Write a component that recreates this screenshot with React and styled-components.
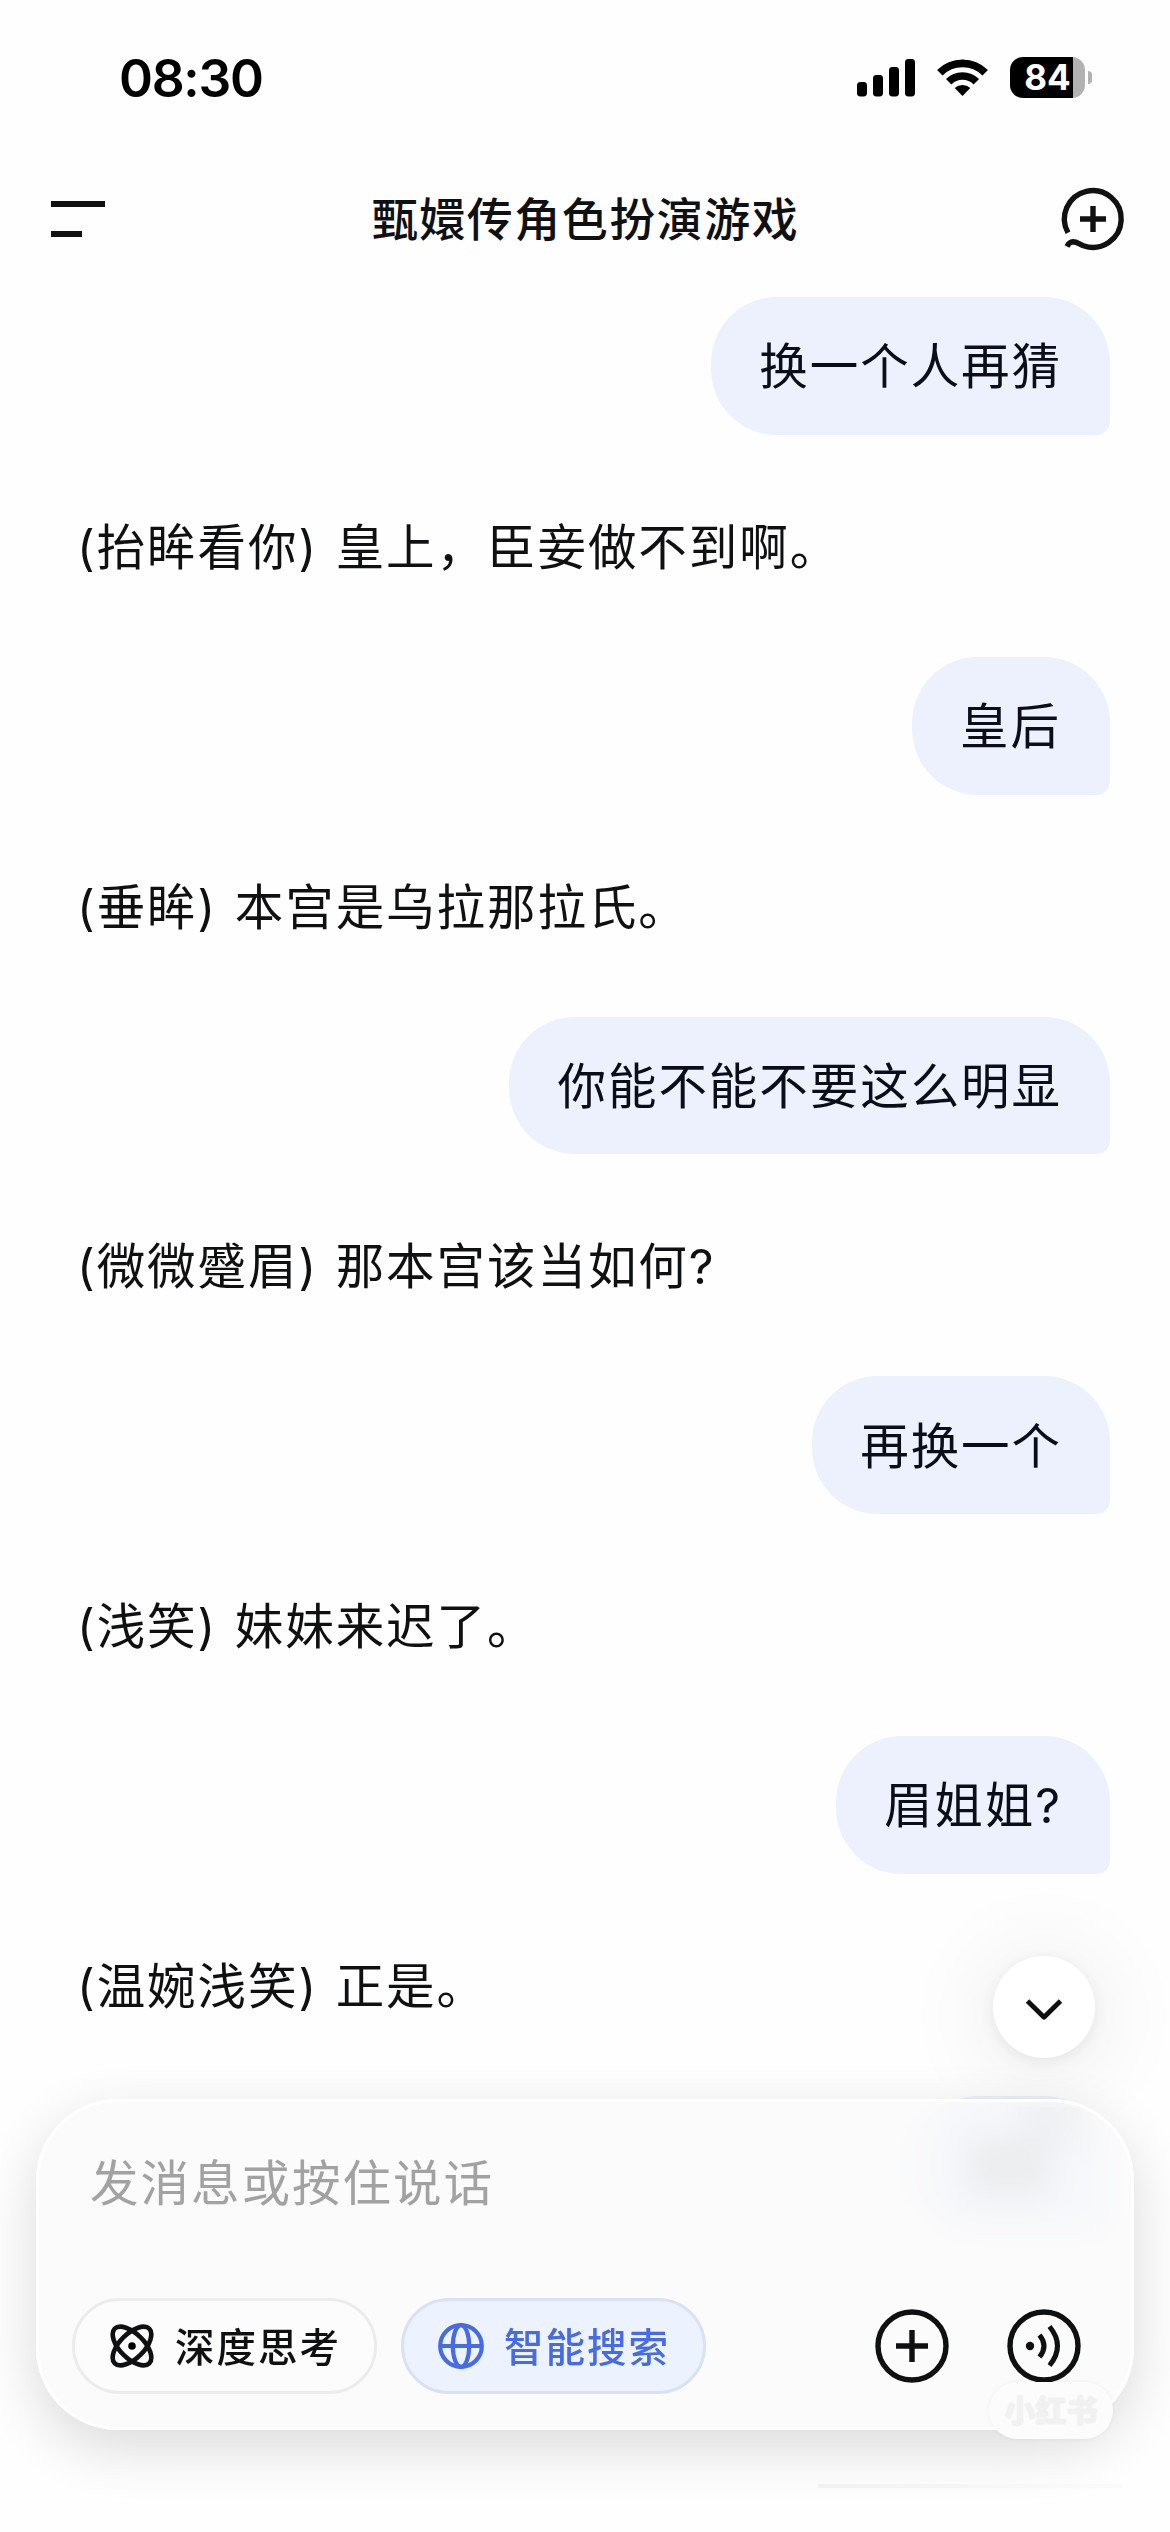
import React from 'react';
import styled, { createGlobalStyle } from 'styled-components';

const GlobalStyle = createGlobalStyle`
  body {
    margin: 0;
    background: #fefefe;
  }
`;

const Screen = styled.div`
  position: relative;
  width: 1170px;
  height: 2532px;
  overflow: hidden;
  background: #fefefe;
  color: #0f1012;
  font-family: 'Noto Sans CJK SC', sans-serif;
`;

const StatusBar = styled.div`
  display: flex;
  justify-content: space-between;
  align-items: center;
  height: 155px;
  padding: 0 78px 0 119px;
  color: #000000;
`;

const Time = styled.span`
  font-family: Inter, sans-serif;
  font-size: 51.5px;
  font-weight: 600;
  line-height: 60px;
  letter-spacing: -1.3px;
`;

const StatusIcons = styled.div`
  display: flex;
  align-items: center;
  gap: 22px;
`;

const Battery = styled.div`
  display: flex;
  align-items: center;
  gap: 3px;
`;

const BatteryBody = styled.div`
  display: flex;
  align-items: center;
  justify-content: center;
  width: 75px;
  height: 41px;
  border-radius: 13px;
  background: linear-gradient(to right, #000000 ${props => props.$level}%, #b2b2b2 ${props => props.$level}%);
  color: #ffffff;
  font-family: Inter, sans-serif;
  font-size: 35px;
  font-weight: 700;
  line-height: 41px;
`;

const BatteryTip = styled.div`
  width: 4px;
  height: 13px;
  border-radius: 0 6px 6px 0;
  background: #b2b2b2;
`;

const Header = styled.div`
  display: flex;
  justify-content: space-between;
  align-items: center;
  height: 128px;
  padding: 0 45px 0 51px;
`;

const Title = styled.h1`
  margin: 0;
  padding-bottom: 6px;
  font-size: 46px;
  font-weight: 500;
  line-height: 60px;
  letter-spacing: 1.5px;
`;

const MenuIcon = styled.div`
  display: flex;
  flex-direction: column;
  gap: 24px;
  width: 61px;
`;

const MenuLine = styled.div`
  width: ${props => props.$width}px;
  height: 6px;
  background: #111111;
`;

const Messages = styled.div`
  display: flex;
  flex-direction: column;
  gap: 81px;
  padding: 14px 60px 0 77px;
  font-family: Inter, 'Noto Sans CJK SC', sans-serif;
  font-size: 48.5px;
  line-height: 60px;
  letter-spacing: 1.95px;
`;

const Bubble = styled.div`
  box-sizing: border-box;
  display: flex;
  align-items: center;
  align-self: flex-end;
  height: 137.75px;
  min-width: 198px;
  padding: 3px 48px 0;
  border-radius: 66px 66px 14px 66px;
  background: #edf1fe;
  color: #0b0e18;
`;

const Reply = styled.div`
  height: 58px;
  padding-top: 2px;
  word-spacing: 2px;
  white-space: nowrap;
`;

const Smudge = styled.div`
  width: 86px;
  height: 62px;
  margin-left: 6px;
  background: rgba(0, 0, 0, 0.2);
  box-shadow: 40px -40px 0 -12px rgba(0, 0, 0, 0.15);
`;

const ScrollDown = styled.div`
  position: absolute;
  top: 1956px;
  left: 993px;
  box-sizing: border-box;
  display: flex;
  align-items: center;
  justify-content: center;
  width: 102px;
  height: 102px;
  padding-top: 6px;
  border-radius: 50%;
  background: #ffffff;
  box-shadow: 0 4px 16px rgba(0, 0, 0, 0.07), 0 8px 90px 16px rgba(0, 0, 0, 0.06);
`;

const Composer = styled.div`
  position: absolute;
  left: 36px;
  right: 36px;
  bottom: 102px;
  box-sizing: border-box;
  display: flex;
  flex-direction: column;
  justify-content: space-between;
  height: 331px;
  padding: 48px 50px 33px 33px;
  border: 3px solid #ffffff;
  border-radius: 82px;
  background: rgba(250, 250, 250, 0.78);
  backdrop-filter: blur(16px);
  box-shadow: 0 18px 56px rgba(0, 0, 0, 0.14);
`;

const Placeholder = styled.div`
  padding-left: 18px;
  color: #a2a2a2;
  font-size: 48.5px;
  line-height: 60px;
  letter-spacing: 2px;
`;

const Actions = styled.div`
  display: flex;
  align-items: center;
  gap: 24px;
`;

const Chip = styled.div`
  box-sizing: border-box;
  display: flex;
  align-items: center;
  gap: 20px;
  width: 305px;
  height: 96px;
  padding-left: 34px;
  border: 3px solid ${props => (props.$active ? '#d8e1f6' : '#ececec')};
  border-radius: 48px;
  background: ${props => (props.$active ? '#edf2ff' : '#fcfcfc')};
  color: ${props => (props.$active ? '#466be2' : '#0f1012')};
`;

const ChipLabel = styled.span`
  padding-bottom: 3px;
  font-size: 39.5px;
  font-weight: 500;
  line-height: 50px;
  letter-spacing: 2px;
`;

const RoundActions = styled.div`
  display: flex;
  gap: 58px;
  margin-left: auto;
`;

const Watermark = styled.div`
  position: absolute;
  top: 2382px;
  left: 989px;
  width: 124px;
  height: 57px;
  border-radius: 29px;
  background: #fcfcfc;
  box-shadow: 0 0 5px rgba(0, 0, 0, 0.05);
  color: #f1f1f1;
  font-size: 31px;
  font-weight: 900;
  line-height: 54px;
  text-align: center;
  text-shadow: 0 0 2px #e4e4e4;
`;

const FaintLine = styled.div`
  position: absolute;
  top: 2484px;
  left: 818px;
  width: 304px;
  height: 4px;
  background: linear-gradient(to right, #f1f1f1, #fbfbfb);
`;

const SignalIcon = () => (
  <svg width="58" height="38" viewBox="0 0 58 38">
    <rect x="0" y="23" width="10" height="14.5" rx="3.4" />
    <rect x="16" y="16" width="10" height="21.5" rx="3.4" />
    <rect x="32" y="8" width="10" height="29.5" rx="3.4" />
    <rect x="48" y="0" width="10" height="37.5" rx="3.4" />
  </svg>
);

const WifiIcon = () => (
  <svg width="51" height="38" viewBox="-0.5 -0.5 51 38">
    <g fill="none" stroke="#000000" strokeWidth="7.7">
      <path d="M2.3 13.3A32.1 32.1 0 0 1 47.7 13.3" />
      <path d="M11.2 22.2A19.5 19.5 0 0 1 38.8 22.2" />
    </g>
    <path d="M17.2 28.6A11.4 11.4 0 0 1 32.8 28.6L25 36.6Z" />
  </svg>
);

const NewChatIcon = () => (
  <svg width="66" height="66" viewBox="-34 -33 66 66" overflow="visible" fill="none" stroke="#111111" strokeWidth="5.4">
    <path d="M-25 13.8A28.4 28.4 0 1 1 -9.5 26.8C-14 25 -16 22.8 -20 22.8C-23 23 -24.5 24.5 -26 27.4" />
    <path d="M-13 0H13M0 -13V13" />
  </svg>
);

const ChevronIcon = () => (
  <svg width="40" height="24" viewBox="0 0 40 24" fill="none" stroke="#0f1012" strokeWidth="4.8" strokeLinejoin="round">
    <path d="M3.5 3L20 19.2L36.5 3" />
  </svg>
);

const AtomIcon = () => (
  <svg width="46" height="46" viewBox="-23 -23 46 46">
    <g fill="none" stroke="#0f1012" strokeWidth="4.6">
      <ellipse rx="24.4" ry="12.2" transform="rotate(45)" />
      <ellipse rx="24.4" ry="12.2" transform="rotate(-45)" />
    </g>
    <circle r="3.8" />
  </svg>
);

const GlobeIcon = () => (
  <svg width="46" height="46" viewBox="-23 -23 46 46" fill="none" stroke="#466be2" strokeWidth="4.2">
    <circle r="20.8" />
    <ellipse rx="8.2" ry="20.8" />
    <path d="M-20.8 0H20.8" />
  </svg>
);

const PlusIcon = () => (
  <svg width="74" height="74" viewBox="-37 -37 74 74" fill="none" stroke="#0f1012" strokeWidth="5.4">
    <circle r="34" />
    <path d="M-16 0H16M0 -16V16" />
  </svg>
);

const VoiceIcon = () => (
  <svg width="74" height="74" viewBox="-37 -37 74 74" fill="none" stroke="#0f1012" strokeWidth="5">
    <circle r="34" strokeWidth="5.4" />
    <circle cx="-14" r="4.2" fill="#0f1012" stroke="none" />
    <path d="M-4.5 -11Q4.5 0 -4.5 11" />
    <path d="M5.5 -19.5Q21.5 0 5.5 19.5" />
  </svg>
);

const messages = [
  { mine: true, text: '换一个人再猜' },
  { text: '(抬眸看你) 皇上，臣妾做不到啊。' },
  { mine: true, text: '皇后' },
  { text: '(垂眸) 本宫是乌拉那拉氏。' },
  { mine: true, text: '你能不能不要这么明显' },
  { text: '(微微蹙眉) 那本宫该当如何?' },
  { mine: true, text: '再换一个' },
  { text: '(浅笑) 妹妹来迟了。' },
  { mine: true, text: '眉姐姐?' },
  { text: '(温婉浅笑) 正是。' },
];

export default function App() {
  return (
    <Screen lang="zh-CN">
      <GlobalStyle />
      <StatusBar>
        <Time>08:30</Time>
        <StatusIcons>
          <SignalIcon />
          <WifiIcon />
          <Battery>
            <BatteryBody $level={84}>84</BatteryBody>
            <BatteryTip />
          </Battery>
        </StatusIcons>
      </StatusBar>
      <Header>
        <MenuIcon>
          <MenuLine $width={54} />
          <MenuLine $width={31} />
        </MenuIcon>
        <Title>甄嬛传角色扮演游戏</Title>
        <NewChatIcon />
      </Header>
      <Messages>
        {messages.map((message, index) => (
          message.mine
            ? <Bubble key={index}>{message.text}</Bubble>
            : <Reply key={index}>{message.text}</Reply>
        ))}
        {/* sits behind the composer, only its blurred shade shows through */}
        <Bubble><Smudge /></Bubble>
      </Messages>
      <ScrollDown>
        <ChevronIcon />
      </ScrollDown>
      <Composer>
        <Placeholder>发消息或按住说话</Placeholder>
        <Actions>
          <Chip>
            <AtomIcon />
            <ChipLabel>深度思考</ChipLabel>
          </Chip>
          <Chip $active>
            <GlobeIcon />
            <ChipLabel>智能搜索</ChipLabel>
          </Chip>
          <RoundActions>
            <PlusIcon />
            <VoiceIcon />
          </RoundActions>
        </Actions>
      </Composer>
      <Watermark>小红书</Watermark>
      <FaintLine />
    </Screen>
  );
}
